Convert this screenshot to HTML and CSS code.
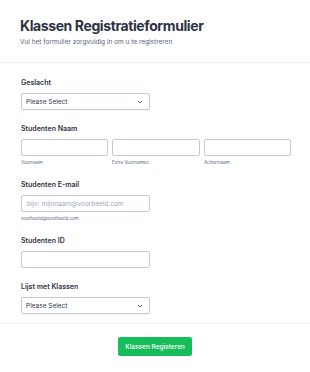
FILE: index.html
```html
<!DOCTYPE html>
<html lang="nl">
<head>
    <meta charset="UTF-8">
    <meta name="viewport" content="width=device-width, initial-scale=1.0">
    <title>Klassen Registratieformulier</title>
    <link rel="stylesheet" href="styles.css">
</head>
<body>
    <div class="form">
        <div class="header">
            <h1>Klassen Registratieformulier</h1>
            <p class="subtitle">Vul het formulier zorgvuldig in om u te registreren</p>
        </div>

        <div class="fields">
            <div class="field">
                <label class="label">Geslacht</label>
                <div class="select">
                    <span>Please Select</span>
                    <svg width="6" height="4" viewBox="0 0 6 4"><path d="M1 1l2 2 2-2" fill="none" stroke="#57647e" stroke-width="0.9"/></svg>
                </div>
            </div>

            <div class="field">
                <label class="label">Studenten Naam</label>
                <div class="name-row">
                    <div class="name-part">
                        <div class="input"></div>
                        <span class="sublabel">Voornaam</span>
                    </div>
                    <div class="name-part">
                        <div class="input"></div>
                        <span class="sublabel">Extra Voornamen</span>
                    </div>
                    <div class="name-part">
                        <div class="input"></div>
                        <span class="sublabel">Achternaam</span>
                    </div>
                </div>
            </div>

            <div class="field">
                <label class="label">Studenten E-mail</label>
                <div class="input wide placeholder">bijv: mijnnaam@voorbeeld.com</div>
                <span class="sublabel">voorbeeld@voorbeeld.com</span>
            </div>

            <div class="field">
                <label class="label">Studenten ID</label>
                <div class="input wide"></div>
            </div>

            <div class="field">
                <label class="label">Lijst met Klassen</label>
                <div class="select">
                    <span>Please Select</span>
                    <svg width="6" height="4" viewBox="0 0 6 4"><path d="M1 1l2 2 2-2" fill="none" stroke="#57647e" stroke-width="0.9"/></svg>
                </div>
            </div>
        </div>

        <div class="footer">
            <button class="submit">Klassen Registeren</button>
        </div>
    </div>
</body>
</html>
```

FILE: styles.css
```css
* {
    box-sizing: border-box;
}

body {
    margin: 0;
    background: #fff;
    font-family: Inter, "Noto Sans", sans-serif;
    color: #2c3345;
}

.header {
    padding: 18px 20px 15px;
    border-bottom: 1px solid #eceef2;
}

h1 {
    margin: 0;
    font-size: 14px;
    font-weight: 700;
    letter-spacing: -0.4px;
    line-height: 16px;
    color: #2c3345;
}

.subtitle {
    margin: 4px 0 0;
    font-size: 6.5px;
    line-height: 9px;
    color: #57647e;
}

.fields {
    padding: 15px 21px 9px;
    border-bottom: 1px solid #eceef2;
}

.field {
    margin-bottom: 14px;
}

.field:last-child {
    margin-bottom: 0;
}

.label {
    display: block;
    font-size: 7px;
    font-weight: 600;
    line-height: 9px;
    margin-bottom: 6px;
    color: #2c3345;
}

.select,
.input {
    height: 17px;
    border: 1px solid #c3cad8;
    border-radius: 2px;
    background: #fff;
}

.select {
    width: 129px;
    display: flex;
    align-items: center;
    justify-content: space-between;
    padding: 0 6px 0 4px;
    font-size: 6.5px;
    color: #2c3345;
    box-shadow: 0 1px 1px rgba(0, 0, 0, 0.04);
}

.name-row {
    display: grid;
    grid-template-columns: 87px 88px 87px;
    gap: 4px;
}

.name-part {
    display: flex;
    flex-direction: column;
}

.sublabel {
    display: block;
    margin-top: 4px;
    font-size: 4.5px;
    line-height: 6px;
    color: #57647e;
}

.input.wide {
    width: 129px;
}

.placeholder {
    display: flex;
    align-items: center;
    padding-left: 5px;
    font-size: 6.5px;
    color: #a0a8b8;
}

.footer {
    display: flex;
    justify-content: center;
    padding-top: 13px;
}

.submit {
    height: 19px;
    padding: 0 7px;
    border: none;
    border-radius: 2px;
    background: #18bd5b;
    color: #fff;
    font-family: Inter, "Noto Sans", sans-serif;
    font-size: 6.5px;
    font-weight: 500;
    cursor: pointer;
}
```
